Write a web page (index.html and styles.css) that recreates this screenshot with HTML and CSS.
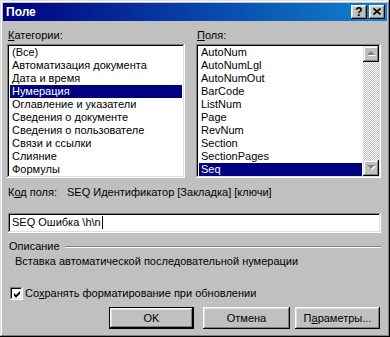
FILE: index.html
```html
<!DOCTYPE html>
<html lang="ru">
<head>
<meta charset="utf-8">
<title>Поле</title>
<link rel="stylesheet" href="styles.css">
</head>
<body>
<div class="window">
  <div class="titlebar">
    <span class="title">Поле</span>
    <div class="tbtns">
      <span class="tbtn help">?</span>
      <span class="tbtn close"><svg width="8" height="7" viewBox="0 0 8 7"><path d="M0.5 0.5 L7.5 6.5 M7.5 0.5 L0.5 6.5" stroke="#000" stroke-width="1.6" fill="none"/></svg></span>
    </div>
  </div>
  <div class="content">
    <div class="lists">
      <div class="col">
        <div class="label"><u>К</u>атегории:</div>
        <div class="listbox">
          <div class="items">
            <div class="item">(Все)</div>
            <div class="item">Автоматизация документа</div>
            <div class="item">Дата и время</div>
            <div class="item sel">Нумерация</div>
            <div class="item">Оглавление и указатели</div>
            <div class="item">Сведения о документе</div>
            <div class="item">Сведения о пользователе</div>
            <div class="item">Связи и ссылки</div>
            <div class="item">Слияние</div>
            <div class="item">Формулы</div>
          </div>
        </div>
      </div>
      <div class="col">
        <div class="label"><u>П</u>оля:</div>
        <div class="listbox">
          <div class="items">
            <div class="item">AutoNum</div>
            <div class="item">AutoNumLgl</div>
            <div class="item">AutoNumOut</div>
            <div class="item">BarCode</div>
            <div class="item">ListNum</div>
            <div class="item">Page</div>
            <div class="item">RevNum</div>
            <div class="item">Section</div>
            <div class="item">SectionPages</div>
            <div class="item sel">Seq</div>
          </div>
          <div class="scrollbar">
            <div class="sbtn"><svg width="9" height="6" viewBox="0 0 9 6"><path d="M5 1 L9 5 L1 5 Z" fill="#fff"/><path d="M4 0 L8 4 L0 4 Z" fill="#808080"/></svg></div>
            <div class="track"></div>
            <div class="sbtn"><svg width="9" height="6" viewBox="0 0 9 6"><path d="M1 1 L9 1 L5 5 Z" fill="#fff"/><path d="M0 0 L8 0 L4 4 Z" fill="#808080"/></svg></div>
          </div>
        </div>
      </div>
    </div>
    <div class="coderow">
      <span class="codelabel">К<u>о</u>д поля:</span>
      <span class="codeval">SEQ Идентификатор [Закладка] [ключи]</span>
    </div>
    <div class="input">SEQ Ошибка \h\n<span class="caret"></span></div>
    <div class="group">
      <span class="grouplabel">Описание</span>
      <span class="etch"></span>
    </div>
    <div class="desc">Вставка автоматической последовательной нумерации</div>
    <div class="check">
      <span class="box"><svg width="9" height="9" viewBox="0 0 9 9"><path d="M1 3 L3 5 L7 1 L7 3.8 L3 7.8 L1 5.8 Z" fill="#000"/></svg></span>
      <span class="checklabel">Со<u>х</u>ранять форматирование при обновлении</span>
    </div>
    <div class="buttons">
      <div class="btn default"><span class="btnface">OK</span></div>
      <div class="btn cancel"><span class="btnface">Отмена</span></div>
      <div class="btn params"><span class="btnface">П<u>а</u>раметры...</span></div>
    </div>
  </div>
</div>
</body>
</html>
```
FILE: styles.css
```css
* {
  box-sizing: border-box;
  margin: 0;
  padding: 0;
}

html, body {
  width: 390px;
  height: 337px;
  overflow: hidden;
  background: #c0c0c0;
}

body {
  font-family: "Liberation Sans", Arial, sans-serif;
  font-size: 11px;
  line-height: 13px;
  color: #000;
}

u {
  text-decoration: underline;
  text-underline-offset: 1px;
}

.window {
  width: 390px;
  height: 337px;
  padding: 3px;
  background: #c0c0c0;
  box-shadow: inset -1px -1px #000, inset 1px 1px #dfdfdf, inset -2px -2px #808080, inset 2px 2px #fff;
  display: flex;
  flex-direction: column;
}

.titlebar {
  height: 18px;
  flex: none;
  background: linear-gradient(to right, #000080, #1084d0);
  display: flex;
  align-items: center;
  padding: 0 2px 0 3px;
}

.title {
  flex: 1;
  color: #fff;
  font-weight: bold;
  font-size: 12px;
}

.tbtns {
  display: flex;
  gap: 2px;
}

.tbtn {
  width: 16px;
  height: 14px;
  background: #c0c0c0;
  box-shadow: inset -1px -1px #000, inset 1px 1px #fff, inset -2px -2px #808080, inset 2px 2px #dfdfdf;
  display: flex;
  align-items: center;
  justify-content: center;
}

.help {
  font-weight: bold;
  font-size: 12px;
  line-height: 12px;
}

.close svg {
  display: block;
  margin-top: -1px;
}

.content {
  padding: 8px 6px 0 4px;
  display: flex;
  flex-direction: column;
}

.lists {
  display: grid;
  grid-template-columns: 178px 185px;
  column-gap: 11px;
}

.label {
  padding-left: 1px;
  height: 13px;
}

.listbox {
  margin-top: 2px;
  height: 134px;
  background: #fff;
  box-shadow: inset -1px -1px #fff, inset 1px 1px #808080, inset -2px -2px #dfdfdf, inset 2px 2px #000;
  padding: 2px;
  display: flex;
  overflow: hidden;
}

.items {
  flex: 1;
  min-width: 0;
  padding-left: 1px;
}

.item {
  height: 13px;
  padding-left: 2px;
  white-space: nowrap;
  margin-right: 1px;
}

.item.sel {
  background: #000080;
  color: #fff;
}

.scrollbar {
  width: 16px;
  flex: none;
  display: flex;
  flex-direction: column;
}

.sbtn {
  height: 16px;
  flex: none;
  background: #c0c0c0;
  box-shadow: inset -1px -1px #000, inset 1px 1px #dfdfdf, inset -2px -2px #808080, inset 2px 2px #fff;
  display: flex;
  align-items: center;
  justify-content: center;
}

.sbtn svg {
  display: block;
}

.track {
  flex: 1;
  background-color: #c0c0c0;
  background-image: conic-gradient(#fff 25%, #c0c0c0 0 50%, #fff 0 75%, #c0c0c0 0);
  background-size: 2px 2px;
}

.coderow {
  margin-top: 8px;
  display: flex;
  height: 13px;
}

.codelabel {
  width: 60px;
  padding-left: 1px;
  flex: none;
}

.input {
  margin-top: 14px;
  margin-left: 1px;
  height: 20px;
  background: #fff;
  box-shadow: inset -1px -1px #fff, inset 1px 1px #808080, inset -2px -2px #dfdfdf, inset 2px 2px #000;
  padding: 3px 4px 0 4px;
  white-space: nowrap;
}

.caret {
  display: inline-block;
  width: 1px;
  height: 13px;
  background: #000;
  vertical-align: top;
  margin-left: 1px;
}

.group {
  margin-top: 7px;
  display: flex;
  align-items: center;
  height: 13px;
  padding-left: 2px;
}

.grouplabel {
  flex: none;
  padding-right: 5px;
}

.etch {
  flex: 1;
  height: 2px;
  border-top: 1px solid #808080;
  border-bottom: 1px solid #fff;
}

.desc {
  margin-top: 2px;
  padding-left: 8px;
  height: 13px;
}

.check {
  margin-top: 19px;
  display: flex;
  align-items: center;
  padding-left: 3px;
  height: 13px;
}

.box {
  width: 13px;
  height: 13px;
  flex: none;
  background: #fff;
  box-shadow: inset -1px -1px #fff, inset 1px 1px #808080, inset -2px -2px #dfdfdf, inset 2px 2px #000;
  display: flex;
  align-items: center;
  justify-content: center;
  padding: 1px 0 0 1px;
}

.box svg {
  display: block;
}

.checklabel {
  padding-left: 2px;
}

.buttons {
  margin-top: 7px;
  display: flex;
  justify-content: flex-end;
  padding-right: 1px;
}

.btn {
  height: 22px;
  background: #c0c0c0;
  box-shadow: inset -1px -1px #000, inset 1px 1px #fff, inset -2px -2px #808080, inset 2px 2px #dfdfdf;
  display: flex;
}

.btnface {
  flex: 1;
  display: flex;
  align-items: center;
  justify-content: center;
}

.btn.default {
  width: 85px;
  margin-right: 9px;
  border: 1px solid #000;
}

.btn.cancel {
  width: 87px;
  margin-right: 5px;
}

.btn.params {
  width: 85px;
}
```
